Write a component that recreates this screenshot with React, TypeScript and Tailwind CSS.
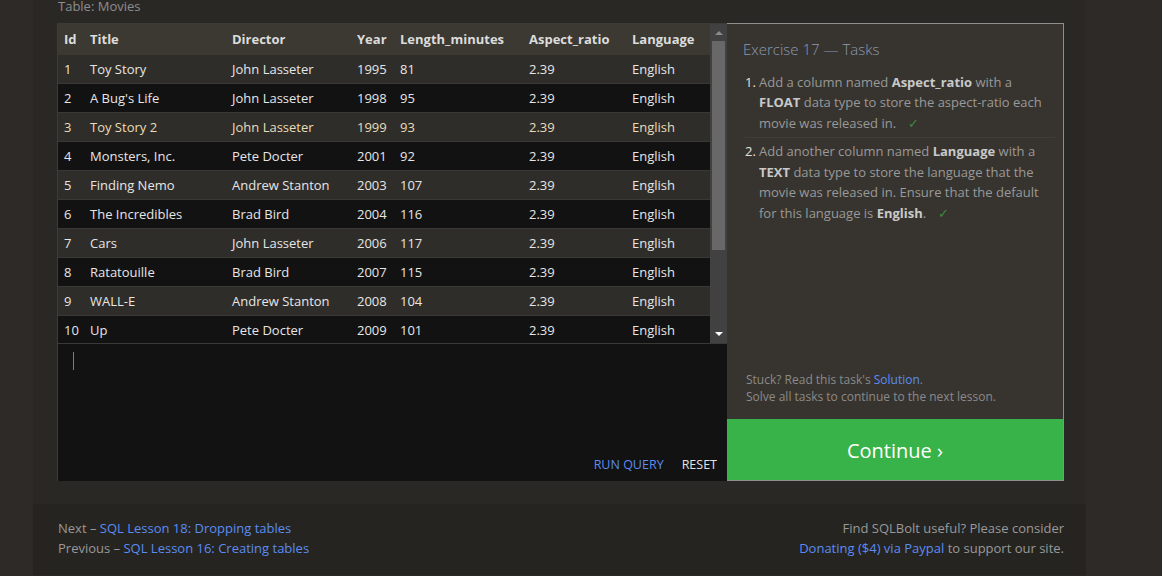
const movies = [
  [1, 'Toy Story', 'John Lasseter', 1995, 81],
  [2, "A Bug's Life", 'John Lasseter', 1998, 95],
  [3, 'Toy Story 2', 'John Lasseter', 1999, 93],
  [4, 'Monsters, Inc.', 'Pete Docter', 2001, 92],
  [5, 'Finding Nemo', 'Andrew Stanton', 2003, 107],
  [6, 'The Incredibles', 'Brad Bird', 2004, 116],
  [7, 'Cars', 'John Lasseter', 2006, 117],
  [8, 'Ratatouille', 'Brad Bird', 2007, 115],
  [9, 'WALL-E', 'Andrew Stanton', 2008, 104],
  [10, 'Up', 'Pete Docter', 2009, 101],
];

const cols = 'grid grid-cols-[26px_142px_125px_43px_129px_103px_85px] pl-[6px] items-center';

function Check() {
  return <span className="ml-3 text-[#3c8a3c]">✓</span>;
}

export default function App() {
  return (
    <div
      className="flex min-h-[576px] bg-[#2d2a28] text-[13px]"
      style={{ fontFamily: '"Open Sans", "Noto Sans", sans-serif' }}
    >
      <div className="ml-[33px] w-[1053px] bg-[#2a2825]">
        {/* table label */}
        <div className="-mt-[1px] h-[24px] pl-[25px] text-[13px] leading-[14px] text-[#8d8d8d]">Table: Movies</div>

        <div className="flex pl-[24px]">
          {/* results + editor */}
          <div className="w-[670px] border-l border-t border-[#3c3b37]">
            <div className="flex h-[319px] bg-[#121212]">
              <div className="flex-1 overflow-hidden">
                <div className={`${cols} h-[31px] bg-[#3b3932] pt-[1px] font-bold text-[#dcdcdc]`}>
                  <span>Id</span>
                  <span>Title</span>
                  <span>Director</span>
                  <span>Year</span>
                  <span>Length_minutes</span>
                  <span>Aspect_ratio</span>
                  <span>Language</span>
                </div>
                {movies.map((m, i) => (
                  <div
                    key={m[0]}
                    className={`${cols} h-[29px] border-b border-[#3a3936] pt-[1px] text-[#e6e6e6] ${
                      i % 2 === 0 ? 'bg-[#2f2d29]' : 'bg-[#121212]'
                    } ${i === 2 ? 'text-[#e8ddb8]' : ''}`}
                  >
                    <span>{m[0]}</span>
                    <span>{m[1]}</span>
                    <span>{m[2]}</span>
                    <span>{m[3]}</span>
                    <span>{m[4]}</span>
                    <span>2.39</span>
                    <span>English</span>
                  </div>
                ))}
              </div>
              {/* scrollbar */}
              <div className="flex w-[17px] flex-col items-center bg-[#414141]">
                <div className="flex h-[17px] items-center justify-center">
                  <svg width="8" height="5" viewBox="0 0 8 5"><path d="M0 5 L4 1 L8 5 Z" fill="#8a8a8a" /></svg>
                </div>
                <div className="h-[209px] w-[13px] bg-[#686868]" />
                <div className="flex-1" />
                <div className="flex h-[17px] items-center justify-center">
                  <svg width="8" height="5" viewBox="0 0 8 5"><path d="M0 0 L4 4 L8 0 Z" fill="#ffffff" /></svg>
                </div>
              </div>
            </div>
            <div className="flex h-[138px] flex-col border-t border-[#3a3936] bg-[#121212]">
              <div className="ml-[15px] mt-[8px] h-[18px] w-px bg-[#7a7a7a]" />
              <div className="flex-1" />
              <div className="flex justify-end gap-[18px] pb-[6px] pr-[10px] text-[12.5px]">
                <span className="text-[#5b8cf2]">RUN QUERY</span>
                <span className="text-[#e2e2e2]">RESET</span>
              </div>
            </div>
          </div>

          {/* tasks */}
          <div className="flex w-[337px] flex-col border border-l-0 border-b-0 border-[#8e8e8e] bg-[#37342f]">
            <div className="px-[16px] pt-[14px] text-[15px] font-light text-[#8c9ab0]">Exercise 17 — Tasks</div>
            <ol className="mt-[11px] pl-[18px] pr-[8px] leading-[20.5px] text-[#999]">
              <li className="flex border-b border-[#413e39] pb-[4px]">
                <span className="w-[14px] text-[#e9e2c8]">1.</span>
                <span className="flex-1">
                  Add a column named <b className="text-[#c9c9c9]">Aspect_ratio</b> with a{' '}
                  <b className="text-[#c9c9c9]">FLOAT</b> data type to store the aspect-ratio each movie was released in.
                  <Check />
                </span>
              </li>
              <li className="flex pt-[3px]">
                <span className="w-[14px] text-[#e2e2e2]">2.</span>
                <span className="flex-1">
                  Add another column named <b className="text-[#c9c9c9]">Language</b> with a{' '}
                  <b className="text-[#c9c9c9]">TEXT</b> data type to store the language that the movie was released in.
                  Ensure that the default for this language is <b className="text-[#c9c9c9]">English</b>.
                  <Check />
                </span>
              </li>
            </ol>
            <div className="flex-1" />
            <div className="px-[19px] pb-[14px] text-[12px] leading-[17px] text-[#8a8a8a]">
              <div>
                Stuck? Read this task's <span className="text-[#5b8cf2]">Solution</span>.
              </div>
              <div>Solve all tasks to continue to the next lesson.</div>
            </div>
            <div className="flex h-[62px] items-center justify-center border-b border-[#8e8e8e] bg-[#38b34a] pt-[2px] text-[20px] text-white">
              Continue ›
            </div>
          </div>
        </div>

        {/* footer */}
        <div className="mt-[23px] flex h-[71px] justify-between bg-[#252421] px-[22px] pl-[25px] pt-[14px] leading-[20px] text-[#999]">
          <div>
            <div>
              Next – <span className="text-[#5b8cf2]">SQL Lesson 18: Dropping tables</span>
            </div>
            <div>
              Previous – <span className="text-[#5b8cf2]">SQL Lesson 16: Creating tables</span>
            </div>
          </div>
          <div className="text-right">
            <div>Find SQLBolt useful? Please consider</div>
            <div>
              <span className="text-[#5b8cf2]">Donating ($4) via Paypal</span> to support our site.
            </div>
          </div>
        </div>
      </div>
    </div>
  );
}
